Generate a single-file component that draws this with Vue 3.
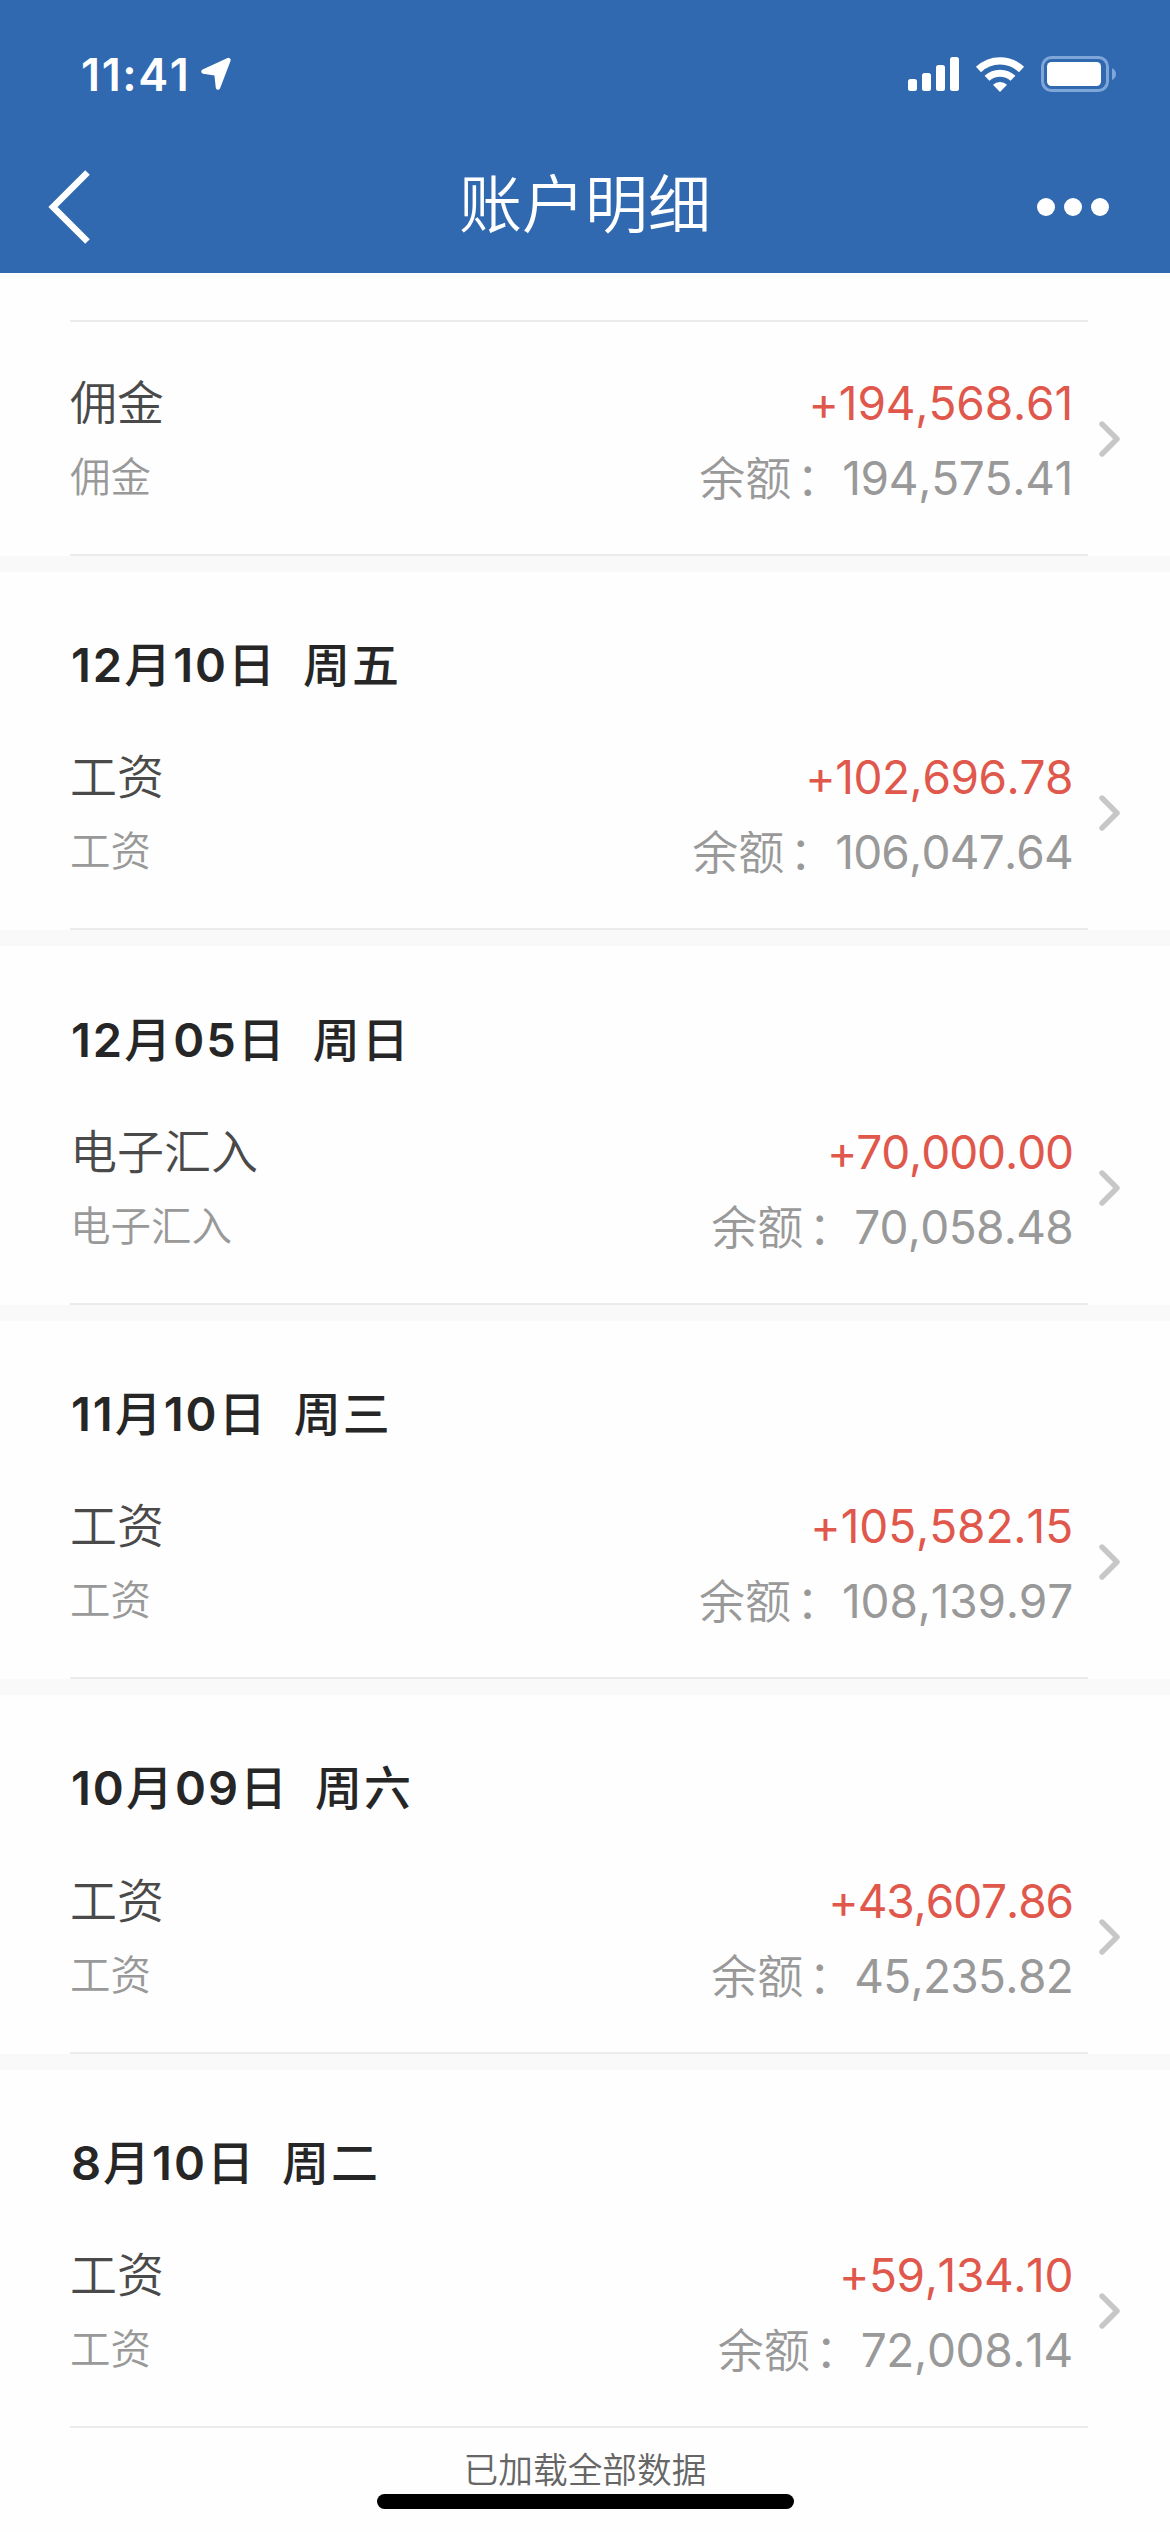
<script setup>
// tracking: letter spacing of the amount and the balance, px
const groups = [
  { date: null, title: '佣金', amount: '+194,568.61', balance: '194,575.41', tracking: [-0.15, -0.3] },
  { date: ['12', '月', '10', '日'], week: '周五', title: '工资', amount: '+102,696.78', balance: '106,047.64', tracking: [-0.45, -0.8] },
  { date: ['12', '月', '05', '日'], week: '周日', title: '电子汇入', amount: '+70,000.00', balance: '70,058.48', tracking: [-1.1, -0.7] },
  { date: ['11', '月', '10', '日'], week: '周三', title: '工资', amount: '+105,582.15', balance: '108,139.97', tracking: [-0.1, -0.2] },
  { date: ['10', '月', '09', '日'], week: '周六', title: '工资', amount: '+43,607.86', balance: '45,235.82', tracking: [-1.1, -0.7] },
  { date: ['8', '月', '10', '日'], week: '周二', title: '工资', amount: '+59,134.10', balance: '72,008.14', tracking: [-0.4, -0.35] },
]
</script>

<template>
  <div class="page">
    <header class="header">
      <div class="status-bar">
        <div class="status-left">
          <span class="time">11:41</span>
          <svg class="location" width="32" height="34" viewBox="0 0 32 34">
            <path d="M28.5 3 L3.5 14.5 L16.5 16.5 L18 30.5 Z" fill="#fff" stroke="#fff" stroke-width="4.5" stroke-linejoin="round" />
          </svg>
        </div>
        <div class="status-right">
          <svg width="52" height="36" viewBox="0 0 52 36" fill="#fff">
            <rect x="0" y="23" width="9" height="12" rx="2.5" />
            <rect x="14" y="17" width="9" height="18" rx="2.5" />
            <rect x="28" y="9" width="9" height="26" rx="2.5" />
            <rect x="42" y="1" width="9" height="34" rx="2.5" />
          </svg>
          <svg class="wifi" width="50" height="36" viewBox="0 0 50 36" fill="none" stroke="#fff">
            <path d="M3.5 13.5 A31 31 0 0 1 46.5 13.5" stroke-width="7.4" />
            <path d="M12 22.3 A19 19 0 0 1 38 22.3" stroke-width="7" />
            <path d="M25 36 L18 28.8 A10 10 0 0 1 32 28.8 Z" fill="#fff" stroke="none" />
          </svg>
          <svg class="battery" width="76" height="36" viewBox="0 0 76 36">
            <rect x="1.5" y="1.5" width="65" height="33" rx="9" fill="none" stroke="#7fa6d8" stroke-width="3" />
            <rect x="6" y="6" width="54" height="24" rx="4.5" fill="#fff" />
            <path d="M71 12 Q75 14 75 18 Q75 22 71 24 Z" fill="#7fa6d8" />
          </svg>
        </div>
      </div>
      <div class="nav-bar">
        <svg class="back" width="44" height="74" viewBox="0 0 44 74">
          <path d="M39.5 2.5 L5 37 L39.5 71.5" fill="none" stroke="#fff" stroke-width="6.5" />
        </svg>
        <h1 class="nav-title">账户明细</h1>
        <div class="more"><i></i><i></i><i></i></div>
      </div>
    </header>

    <main class="list">
      <section v-for="(item, i) in groups" :key="i" class="group" :class="{ first: !item.date }">
        <h2 v-if="item.date" class="date">
          <span class="num">{{ item.date[0] }}</span><span class="cjk">{{ item.date[1] }}</span><span class="num">{{ item.date[2] }}</span><span class="cjk">{{ item.date[3] }}</span>
          <span class="cjk week">{{ item.week }}</span>
        </h2>
        <div class="row">
          <div class="names">
            <div class="title">{{ item.title }}</div>
            <div class="sub">{{ item.title }}</div>
          </div>
          <div class="money">
            <div class="amount" :style="{ letterSpacing: item.tracking[0] + 'px' }">{{ item.amount }}</div>
            <div class="balance">
              <span class="label">余额<span class="colon">：</span></span><span :style="{ letterSpacing: item.tracking[1] + 'px' }">{{ item.balance }}</span>
            </div>
          </div>
          <svg class="arrow" width="22" height="36" viewBox="0 0 22 36">
            <path d="M3 3 L18 18 L3 33" fill="none" stroke="#c7c7c7" stroke-width="5.4" stroke-linecap="round" stroke-linejoin="round" />
          </svg>
        </div>
      </section>
    </main>

    <footer class="footer">
      <p>已加载全部数据</p>
      <div class="home-indicator"></div>
    </footer>
  </div>
</template>

<style>
body {
  margin: 0;
  background: #fefefe;
}
</style>

<style scoped>
.page {
  width: 1170px;
  height: 2532px;
  overflow: hidden;
  background: #fefefe;
  font-family: Inter, 'Noto Sans CJK SC', sans-serif;
  font-kerning: none;
}

.header {
  height: 273px;
  background: #3069b0;
  color: #fff;
}

.status-bar {
  height: 148px;
  box-sizing: border-box;
  padding: 0 53px 0 81px;
  display: flex;
  align-items: center;
  justify-content: space-between;
}

.status-left,
.status-right {
  display: flex;
  align-items: center;
}

.time {
  width: 108px;
  font-size: 45px;
  font-weight: 600;
  letter-spacing: 1.6px;
  white-space: nowrap;
}

.location {
  margin-left: 11px;
}

.wifi {
  margin-left: 15px;
}

.battery {
  margin-left: 16px;
}

.nav-bar {
  height: 118px;
  box-sizing: border-box;
  padding: 0 61px 0 48px;
  display: grid;
  grid-template-columns: 200px 1fr 187px;
  align-items: center;
}

.nav-title {
  margin: -7px 0 0;
  font-size: 63px;
  line-height: 90px;
  font-weight: 350;
  text-align: center;
}

.more {
  display: flex;
  justify-content: flex-end;
  gap: 9px;
}

.more i {
  width: 18px;
  height: 18px;
  border-radius: 50%;
  background: #fff;
}

.group {
  height: 358.4px;
  border-bottom: 16px solid #f9f9f9;
}

.group.first {
  height: 283px;
}

.group.first .row {
  height: 236px;
  border-top: 2px solid #ebebeb;
}

.group.first::before {
  content: '';
  display: block;
  height: 47px;
}

.group:last-child {
  border-bottom: 0;
}

.date {
  height: 124.4px;
  margin: 0;
  padding: 61px 0 0 71px;
  box-sizing: border-box;
  display: flex;
  align-items: center;
  line-height: 63px;
  font-size: 47px;
  font-weight: 600;
  letter-spacing: 2px;
  color: #262626;
}

.cjk {
  font-weight: 500;
}

.week {
  margin-left: 26px;
}

.row {
  height: 234px;
  margin: 0 82px 0 70px;
  box-sizing: border-box;
  display: flex;
  border-bottom: 2px solid #ebebeb;
}

.names {
  flex: 1;
}

.title {
  margin-top: 44px;
  font-size: 47px;
  line-height: 74px;
  color: #4a4a4a;
  font-weight: 350;
}

.sub {
  margin-top: 1px;
  font-size: 40.5px;
  line-height: 74px;
  color: #999;
  font-weight: 350;
}

.money {
  text-align: right;
  margin-right: 33px;
  font-size: 46px;
}

.amount {
  margin-top: 44px;
  line-height: 74px;
  color: #e0574c;
}

.balance {
  margin-top: 1px;
  line-height: 74px;
  color: #999;
}

.label {
  font-weight: 350;
}

.colon {
  margin-left: 5px;
}

.arrow {
  flex: none;
  margin: 99px -33px 0 -7px;
}

.footer {
  display: flex;
  flex-direction: column;
  align-items: center;
}

.footer p {
  margin: 18px 0 0;
  font-size: 34.7px;
  line-height: 48px;
  font-weight: 350;
  color: #666;
}

.home-indicator {
  width: 417px;
  height: 15px;
  border-radius: 8px;
  background: #000;
}
</style>
